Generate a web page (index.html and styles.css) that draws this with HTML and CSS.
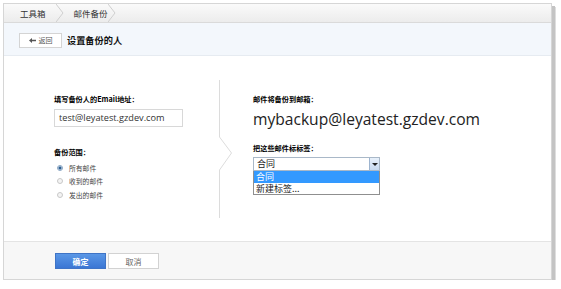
FILE: index.html
```html
<!DOCTYPE html>
<html>
  <head>
    <meta charset="utf-8" />
    <title>邮件备份</title>
    <link rel="stylesheet" href="styles.css">
  </head>
  <body>
    <div class="frame">
      <div class="crumbs">
        <span class="crumb first">工具箱</span>
        <svg class="sep" width="8" height="18" viewBox="0 0 8 18"><polyline points="0,0 7,9 0,18" fill="none" stroke="#cfcfcf" stroke-width="1"/></svg>
        <span class="crumb">邮件备份</span>
        <svg class="sep" width="8" height="18" viewBox="0 0 8 18"><polyline points="0,0 7,9 0,18" fill="none" stroke="#cfcfcf" stroke-width="1"/></svg>
      </div>

      <div class="head">
        <a href="#" class="back">
          <svg class="arrow" width="7" height="5" viewBox="0 0 7 5"><path d="M0 2.5 L3 0 L3 1.7 L7 1.7 L7 3.3 L3 3.3 L3 5 Z" fill="#555"/></svg>返回
        </a>
        <h1>设置备份的人</h1>
      </div>

      <div class="content">
        <div class="left">
          <div class="label">填写备份人的Email地址：</div>
          <div class="input">test@leyatest.gzdev.com</div>
          <div class="label range">备份范围：</div>
          <div class="radio"><span class="dot on"></span>所有邮件</div>
          <div class="radio"><span class="dot"></span>收到的邮件</div>
          <div class="radio"><span class="dot"></span>发出的邮件</div>
        </div>

        <svg class="divider" width="14" height="138" viewBox="0 0 14 138">
          <polyline points="0.5,0 0.5,57 12.5,73 0.5,90 0.5,138" fill="none" stroke="#dcdcdc" stroke-width="1"/>
        </svg>

        <div class="right">
          <div class="label">邮件将备份到邮箱：</div>
          <div class="target">mybackup@leyatest.gzdev.com</div>
          <div class="label tag">把这些邮件标标签：</div>
          <div class="select">
            <div class="current">合同<span class="drop"></span></div>
            <div class="options">
              <div class="opt sel">合同</div>
              <div class="opt">新建标签...</div>
            </div>
          </div>
        </div>
      </div>

      <div class="foot">
        <button type="button" class="btn ok">确定</button>
        <button type="button" class="btn">取消</button>
      </div>
    </div>
  </body>
</html>
```

FILE: styles.css
```css
* {
    box-sizing: border-box;
    font-family: "Noto Sans CJK SC", "Liberation Sans", sans-serif;
}

body {
    margin: 0;
    background-color: #fff;
    color: #333;
}

.frame {
    margin: 3px 0 0 3px;
    width: 549px;
    height: 277px;
    border: 1px solid #d6d6d6;
    box-shadow: 3px 3px 0 #c4c4c4, 4px 4px 0 #dedede;
    display: flex;
    flex-direction: column;
}

.crumbs {
    height: 19px;
    display: flex;
    align-items: center;
    background: linear-gradient(#fafafa, #ececec);
    border-bottom: 1px solid #dadada;
    font-size: 8.5px;
    color: #333;
}

.crumb {
    line-height: 18px;
}

.crumb.first {
    margin-left: 16px;
    margin-right: 10px;
}

.sep {
    display: block;
    margin-right: 10px;
}

.head {
    height: 33px;
    display: flex;
    align-items: center;
    background-color: #f3f7fc;
    border-bottom: 1px solid #e6ebf1;
    padding-left: 15px;
}

.back {
    display: flex;
    align-items: center;
    justify-content: center;
    width: 43px;
    height: 15px;
    background-color: #fff;
    border: 1px solid #d4d4d4;
    font-size: 7px;
    color: #555;
    text-decoration: none;
    margin-top: 2px;
}

.back .arrow {
    display: block;
    margin-right: 3px;
}

h1 {
    margin: 2px 0 0 5px;
    font-size: 9.2px;
    font-weight: bold;
    color: #111;
}

.content {
    flex: 1;
    display: flex;
    padding-left: 50px;
    background-color: #fff;
}

.left {
    width: 165px;
    padding-top: 38px;
}

.label {
    font-size: 7.2px;
    font-weight: bold;
    color: #000;
    line-height: 10px;
}

.input {
    margin-top: 5px;
    width: 129px;
    height: 18px;
    border: 1px solid #d8d8d8;
    font-family: "Open Sans", sans-serif;
    font-size: 9.2px;
    line-height: 16px;
    padding-left: 4px;
    color: #333;
}

.range {
    margin-top: 20px;
    margin-bottom: 4px;
}

.radio {
    display: flex;
    align-items: center;
    height: 13.5px;
    font-size: 6.8px;
    color: #444;
    padding-left: 3px;
}

.dot {
    width: 6px;
    height: 6px;
    border-radius: 50%;
    border: 1px solid #c8c8c8;
    background: #f4f4f4;
    margin-right: 6px;
}

.dot.on {
    border-color: #8aa6c4;
    background: radial-gradient(circle, #2d5f92 0 1.3px, #dfe8f2 1.8px);
}

.divider {
    display: block;
    margin-top: 24px;
    margin-right: 20px;
}

.right {
    padding-top: 38px;
}

.target {
    margin-top: 4px;
    font-family: "Open Sans", sans-serif;
    font-size: 15.6px;
    line-height: 22px;
    color: #222;
}

.tag {
    margin-top: 13px;
}

.select {
    margin-top: 4px;
    width: 127px;
    font-size: 9px;
    color: #222;
}

.current {
    position: relative;
    height: 14px;
    border: 1px solid #a9b8c8;
    line-height: 12px;
    padding-left: 3px;
}

.drop {
    position: absolute;
    right: 0;
    top: 0;
    width: 10px;
    height: 12px;
    border-left: 1px solid #9db4cf;
    background: linear-gradient(#e8f1fb, #c8daf0);
}

.drop::after {
    content: "";
    position: absolute;
    left: 2px;
    top: 5px;
    border: 3px solid transparent;
    border-top: 3px solid #222;
    border-bottom: 0;
}

.options {
    border: 1px solid #8f8f8f;
    border-top: 0;
}

.opt {
    height: 11.5px;
    line-height: 11.5px;
    padding-left: 2px;
    overflow: hidden;
}

.opt.sel {
    background-color: #3399ff;
    color: #fff;
}

.foot {
    height: 38px;
    background-color: #f7f7f7;
    border-top: 1px solid #e4e4e4;
    padding: 11px 0 0 51px;
    display: flex;
    align-items: flex-start;
    gap: 2px;
}

.btn {
    width: 51px;
    height: 16px;
    padding: 0;
    border: 1px solid #d2d2d2;
    background-color: #fff;
    font-size: 8px;
    color: #666;
}

.btn.ok {
    border-color: #3f74c6;
    background: linear-gradient(#5a97e6, #3b76d4);
    color: #fff;
    font-weight: bold;
}
```
